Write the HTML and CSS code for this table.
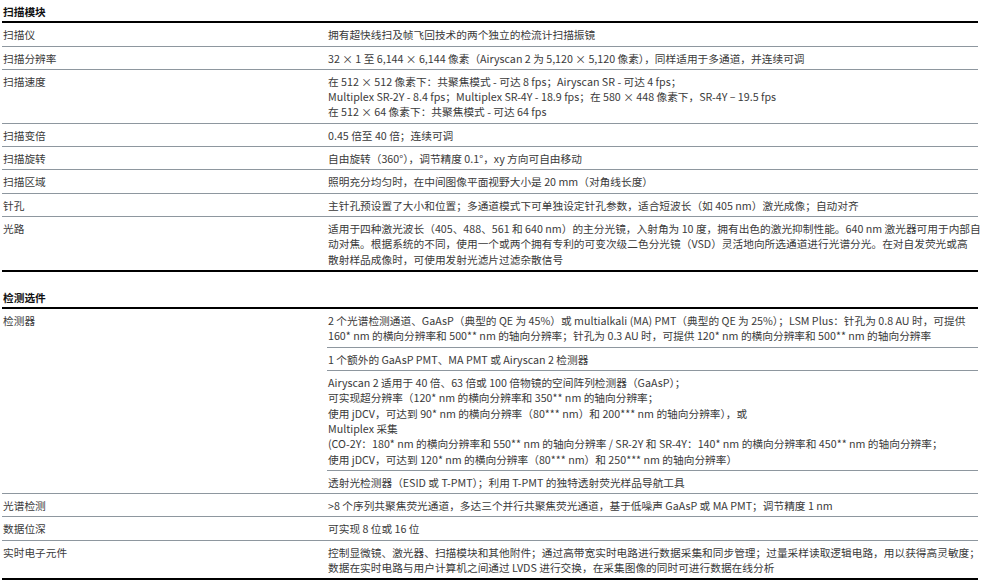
FILE: index.html
```html
<!DOCTYPE html>
<html lang="zh-CN">
<head>
<meta charset="utf-8">
<title>扫描模块 / 检测选件</title>
<link rel="stylesheet" href="styles.css">
</head>
<body>
<div class="page">
  <section class="spec">
    <h2 class="spec-title">扫描模块</h2>
    <div class="spec-body">
      <div class="row"><div class="label">扫描仪</div><div class="value">拥有超快线扫及帧飞回技术的两个独立的检流计扫描振镜</div></div>
      <div class="row"><div class="label">扫描分辨率</div><div class="value">32 × 1 至 6,144 × 6,144 像素（Airyscan 2 为 5,120 × 5,120 像素），同样适用于多通道，并连续可调</div></div>
      <div class="row"><div class="label">扫描速度</div><div class="value">在 512 × 512 像素下：共聚焦模式 - 可达 8 fps；Airyscan SR - 可达 4 fps；<br>Multiplex SR-2Y - 8.4 fps；Multiplex SR-4Y - 18.9 fps；在 580 × 448 像素下，SR-4Y – 19.5 fps<br>在 512 × 64 像素下：共聚焦模式 - 可达 64 fps</div></div>
      <div class="row"><div class="label">扫描变倍</div><div class="value">0.45 倍至 40 倍；连续可调</div></div>
      <div class="row"><div class="label">扫描旋转</div><div class="value">自由旋转（360°），调节精度 0.1°，xy 方向可自由移动</div></div>
      <div class="row"><div class="label">扫描区域</div><div class="value">照明充分均匀时，在中间图像平面视野大小是 20 mm（对角线长度）</div></div>
      <div class="row"><div class="label">针孔</div><div class="value">主针孔预设置了大小和位置；多通道模式下可单独设定针孔参数，适合短波长（如 405 nm）激光成像；自动对齐</div></div>
      <div class="row"><div class="label">光路</div><div class="value">适用于四种激光波长（405、488、561 和 640 nm）的主分光镜，入射角为 10 度，拥有出色的激光抑制性能。640 nm 激光器可用于内部自<br>动对焦。根据系统的不同，使用一个或两个拥有专利的可变次级二色分光镜（VSD）灵活地向所选通道进行光谱分光。在对自发荧光或高<br>散射样品成像时，可使用发射光滤片过滤杂散信号</div></div>
    </div>
  </section>

  <section class="spec spec-next">
    <h2 class="spec-title">检测选件</h2>
    <div class="spec-body">
      <div class="row"><div class="label">检测器</div>
        <div class="value-group">
          <div class="sub">2 个光谱检测通道、GaAsP（典型的 QE 为 45%）或 multialkali (MA) PMT（典型的 QE 为 25%）；LSM Plus：针孔为 0.8 AU 时，可提供<br>160* nm 的横向分辨率和 500** nm 的轴向分辨率；针孔为 0.3 AU 时，可提供 120* nm 的横向分辨率和 500** nm 的轴向分辨率</div>
          <div class="sub">1 个额外的 GaAsP PMT、MA PMT 或 Airyscan 2 检测器</div>
          <div class="sub">Airyscan 2 适用于 40 倍、63 倍或 100 倍物镜的空间阵列检测器（GaAsP）；<br>可实现超分辨率（120* nm 的横向分辨率和 350** nm 的轴向分辨率；<br>使用 jDCV，可达到 90* nm 的横向分辨率（80*** nm）和 200*** nm 的轴向分辨率），或<br>Multiplex 采集<br>(CO-2Y：180* nm 的横向分辨率和 550** nm 的轴向分辨率 / SR-2Y 和 SR-4Y：140* nm 的横向分辨率和 450** nm 的轴向分辨率；<br>使用 jDCV，可达到 120* nm 的横向分辨率（80*** nm）和 250*** nm 的轴向分辨率）</div>
          <div class="sub">透射光检测器（ESID 或 T-PMT）；利用 T-PMT 的独特透射荧光样品导航工具</div>
        </div>
      </div>
      <div class="row"><div class="label">光谱检测</div><div class="value">&gt;8 个序列共聚焦荧光通道，多达三个并行共聚焦荧光通道，基于低噪声 GaAsP 或 MA PMT；调节精度 1 nm</div></div>
      <div class="row"><div class="label">数据位深</div><div class="value">可实现 8 位或 16 位</div></div>
      <div class="row"><div class="label">实时电子元件</div><div class="value">控制显微镜、激光器、扫描模块和其他附件；通过高带宽实时电路进行数据采集和同步管理；过量采样读取逻辑电路，用以获得高灵敏度；<br>数据在实时电路与用户计算机之间通过 LVDS 进行交换，在采集图像的同时可进行数据在线分析</div></div>
    </div>
  </section>
</div>
</body>
</html>
```

FILE: styles.css
```css
html, body {
  margin: 0;
  padding: 0;
  background: #ffffff;
}

body {
  font-family: "Noto Sans CJK SC", "Noto Sans", sans-serif;
  font-size: 10.7px;
  line-height: 15.3px;
  color: #3a3a3a;
}

.page {
  width: 976px;
  padding-left: 2px;
}

.spec-next {
  margin-top: 14px;
}

.spec-title {
  margin: 0;
  padding: 4px 1px 2px;
  font-size: 10.7px;
  line-height: 15.3px;
  font-weight: bold;
  color: #111111;
  border-bottom: 2px solid #000000;
}

.spec-body {
  border-bottom: 2px solid #000000;
}

.row {
  display: grid;
  grid-template-columns: 325px 1fr;
  border-bottom: 1px solid #8e979f;
}

.row:last-child {
  border-bottom: none;
}

.label {
  padding: 4px 1px 3px;
}

.value {
  padding: 4px 1px 3px;
  white-space: nowrap;
}

.sub {
  padding: 4px 1px 3px;
  white-space: nowrap;
  border-bottom: 1px solid #8e979f;
}

.sub:last-child {
  border-bottom: none;
}
```
